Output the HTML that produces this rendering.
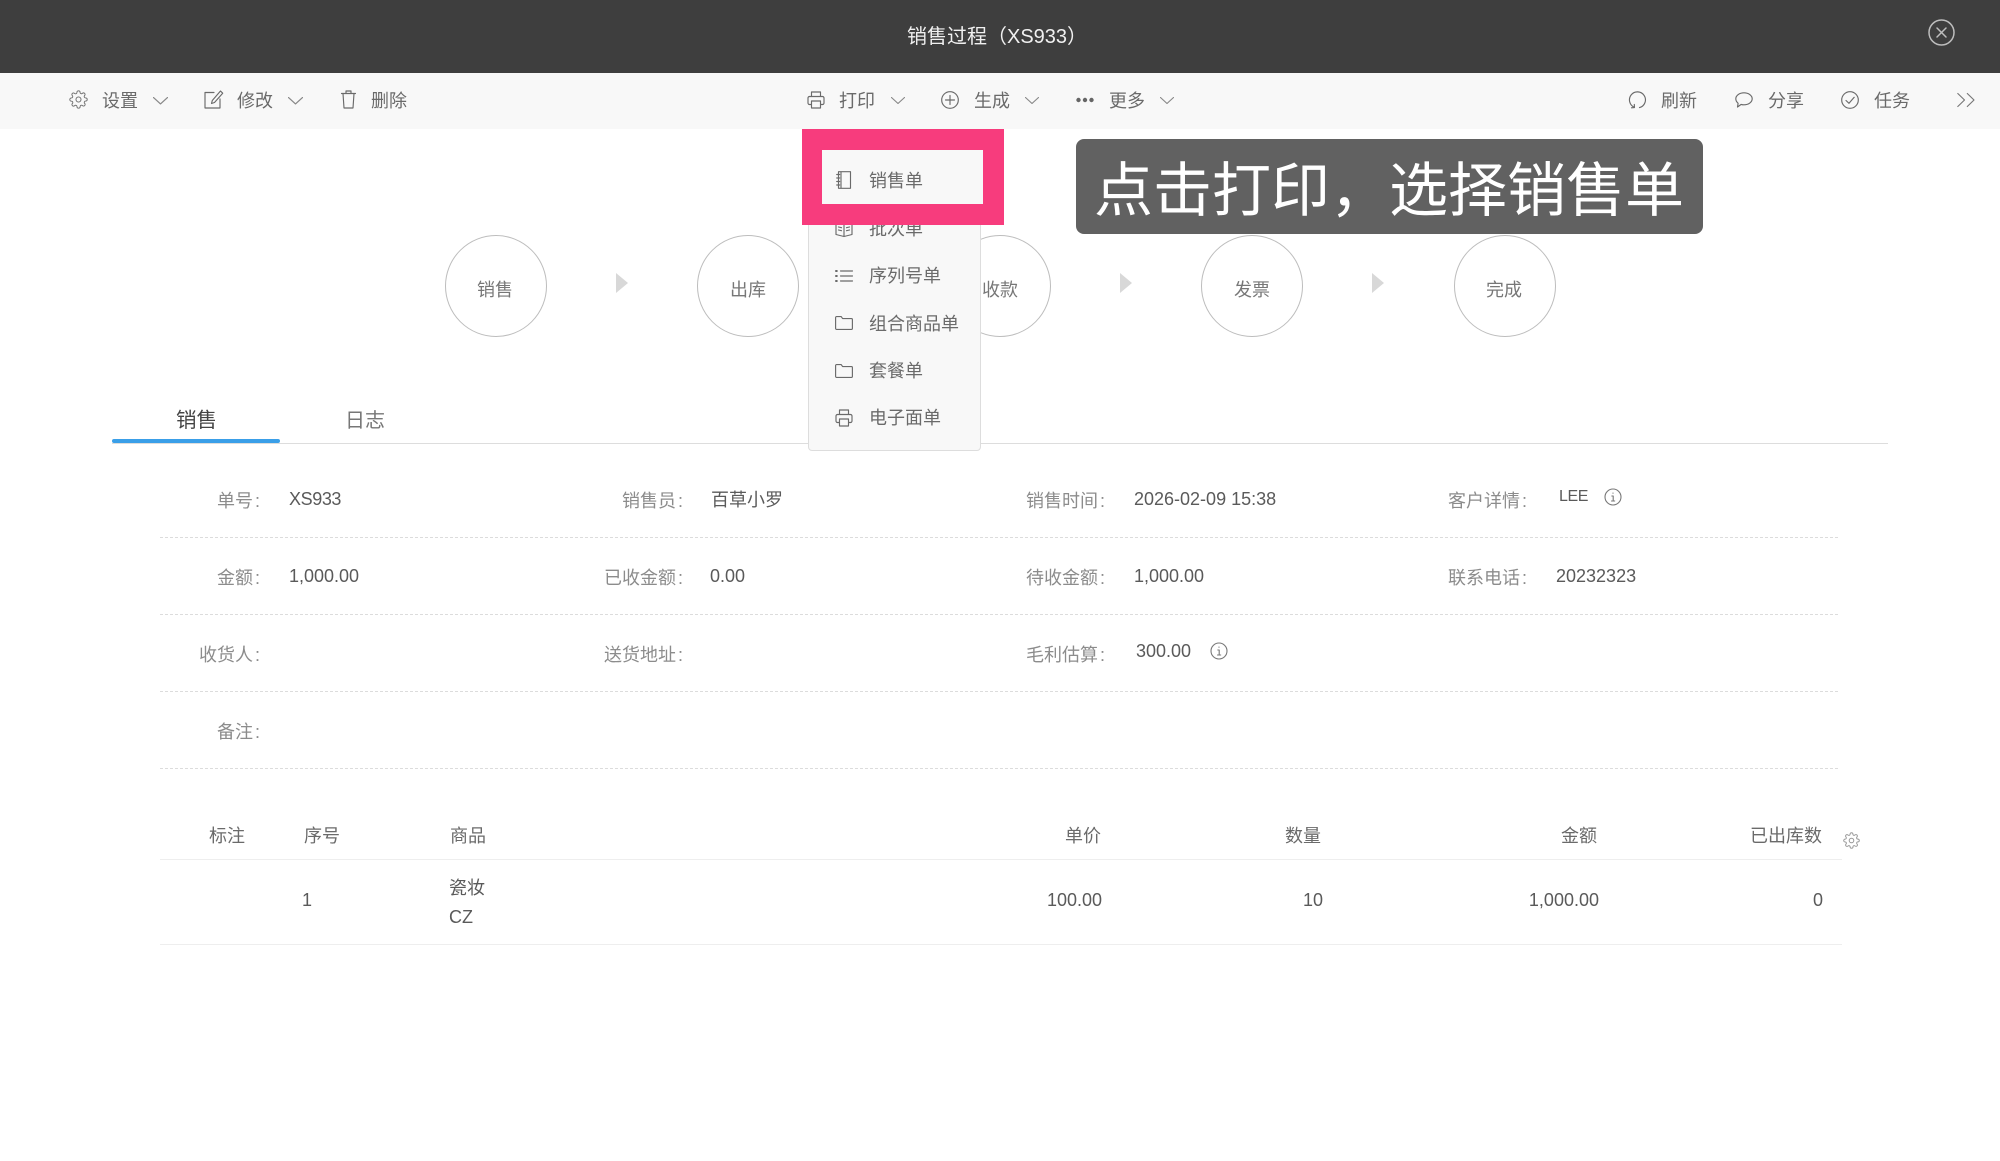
<!DOCTYPE html>
<html lang="zh">
<head>
<meta charset="utf-8">
<title>销售过程</title>
<style>
html,body{margin:0;padding:0;width:2000px;height:1161px;overflow:hidden;background:#fff}
body{position:relative;font-family:"Liberation Sans","Noto Sans CJK SC",sans-serif;font-size:18px;color:#555;font-weight:400}
.t{position:absolute;white-space:nowrap;line-height:24px;height:24px}
.r{text-align:right}
.b{position:absolute}
.tb{color:#6a6a6a}
.l{color:#8c8c8c}
.l span{margin-left:2px}
.v{color:#5a5a5a}
.h{color:#6a6a6a}
svg{position:absolute;overflow:visible;fill:none;stroke:#6a6a6a;stroke-width:1.15;stroke-linecap:round;stroke-linejoin:round}
.c{position:absolute;width:100px;height:100px;border:1.5px solid #bdbdbd;border-radius:50%;background:#fff}
.tri{position:absolute;width:0;height:0;border-left:12px solid #d8d8d8;border-top:10px solid transparent;border-bottom:10px solid transparent}
.d{position:absolute;left:160px;width:1678px;height:0;border-top:1px dashed #dcdcdc}
.ct{color:#777;width:100px;text-align:center}
</style>
</head>
<body>
<svg width="0" height="0" style="position:absolute"><defs>
<symbol id="gear" viewBox="0 0 24 24"><circle cx="12" cy="12" r="3.2"/><path d="M19.4 15a1.65 1.65 0 0 0 .33 1.82l.06.06a2 2 0 0 1 0 2.83 2 2 0 0 1-2.83 0l-.06-.06a1.65 1.65 0 0 0-1.82-.33 1.65 1.65 0 0 0-1 1.51V21a2 2 0 0 1-2 2 2 2 0 0 1-2-2v-.09A1.65 1.65 0 0 0 9 19.4a1.65 1.65 0 0 0-1.82.33l-.06.06a2 2 0 0 1-2.83 0 2 2 0 0 1 0-2.83l.06-.06a1.65 1.65 0 0 0 .33-1.82 1.65 1.65 0 0 0-1.51-1H3a2 2 0 0 1-2-2 2 2 0 0 1 2-2h.09A1.65 1.65 0 0 0 4.6 9a1.65 1.65 0 0 0-.33-1.82l-.06-.06a2 2 0 0 1 0-2.83 2 2 0 0 1 2.83 0l.06.06a1.65 1.65 0 0 0 1.82.33H9a1.65 1.65 0 0 0 1-1.51V3a2 2 0 0 1 2-2 2 2 0 0 1 2 2v.09a1.65 1.65 0 0 0 1 1.51 1.65 1.65 0 0 0 1.82-.33l.06-.06a2 2 0 0 1 2.83 0 2 2 0 0 1 0 2.83l-.06.06a1.65 1.65 0 0 0-.33 1.82V9a1.65 1.65 0 0 0 1.51 1H21a2 2 0 0 1 2 2 2 2 0 0 1-2 2h-.09a1.65 1.65 0 0 0-1.51 1z"/></symbol>
<symbol id="print" viewBox="0 0 18 18"><path d="M4.500 5.500V1h9v4.500M4.500 13.500H2.500a1.500 1.500 0 0 1-1.500-1.500V7a1.500 1.500 0 0 1 1.500-1.500h13A1.500 1.500 0 0 1 17 7v5a1.500 1.500 0 0 1-1.500 1.500h-2M4.500 10h9v7h-9z"/></symbol>
<symbol id="chev" viewBox="0 0 14 7"><path d="M.5.5 7 6.500 13.500.5"/></symbol>
<symbol id="folder" viewBox="0 0 18 14"><path d="M.6 1.600a1 1 0 0 1 1-1h4.600l1.400 2h8.800a1 1 0 0 1 1 1v8.800a1 1 0 0 1-1 1H1.600a1 1 0 0 1-1-1z"/></symbol>
<symbol id="info" viewBox="0 0 18 18"><circle cx="9" cy="9" r="8"/><path d="M7.800 8h1.400v5M7.500 13h3.200M9 5v.3"/></symbol>
</defs></svg>

<!-- header -->
<div class="b" style="left:0;top:0;width:2000px;height:73px;background:#3e3e3e"></div>
<div class="t" style="left:907px;top:25px;font-size:20px;color:#f0f0f0">销售过程（XS933）</div>
<svg style="left:1928px;top:19px;stroke:#bdbdbd;stroke-width:1.5" width="27" height="27" viewBox="0 0 27 27"><circle cx="13.500" cy="13.500" r="12.500"/><path d="M9 9l9 9M18 9l-9 9"/></svg>

<!-- toolbar -->
<div class="b" style="left:0;top:73px;width:2000px;height:56px;background:#f8f8f8"></div>

<svg style="left:69px;top:90px" width="19" height="19"><use href="#gear"/></svg>
<div class="t tb" style="left:102px;top:89px">设置</div>
<svg style="left:153px;top:97px;stroke:#888" width="15" height="7.500"><use href="#chev"/></svg>

<svg style="left:204px;top:90px" width="20" height="19" viewBox="0 0 20 19"><path d="M10 2.500H1v15.500h15V9M16.500 1l2.200 2.200L10.500 12.500l-3 1 .8-3z"/></svg>
<div class="t tb" style="left:237px;top:89px">修改</div>
<svg style="left:288px;top:97px;stroke:#888" width="15" height="7.500"><use href="#chev"/></svg>

<svg style="left:341px;top:90px" width="15" height="19" viewBox="0 0 15 19"><path d="M.5 3.500h14M5 3.500V1h5v2.500M2 3.500l1 14.500h9l1-14.500"/></svg>
<div class="t tb" style="left:371px;top:89px">删除</div>

<svg style="left:807px;top:91px" width="18" height="18"><use href="#print"/></svg>
<div class="t tb" style="left:839px;top:89px">打印</div>
<svg style="left:891px;top:97px;stroke:#888" width="14" height="7"><use href="#chev"/></svg>

<svg style="left:941px;top:91px" width="18" height="18" viewBox="0 0 18 18"><circle cx="9" cy="9" r="8.300"/><path d="M9 4.500v9M4.500 9h9"/></svg>
<div class="t tb" style="left:974px;top:89px">生成</div>
<svg style="left:1025px;top:97px;stroke:#888" width="14" height="7"><use href="#chev"/></svg>

<svg style="left:1076px;top:97px;fill:#666;stroke:none" width="18" height="6" viewBox="0 0 18 6"><circle cx="2.500" cy="3" r="2.200"/><circle cx="9" cy="3" r="2.200"/><circle cx="15.500" cy="3" r="2.200"/></svg>
<div class="t tb" style="left:1109px;top:89px">更多</div>
<svg style="left:1160px;top:97px;stroke:#888" width="14" height="7"><use href="#chev"/></svg>

<svg style="left:1628px;top:91px" width="18" height="18" viewBox="0 0 18 18"><path d="M6.500 16.300A8 8 0 1 1 11.500 16.600M6.300 13.500l.2 3-3 .3"/></svg>
<div class="t tb" style="left:1661px;top:89px">刷新</div>
<svg style="left:1735px;top:92px" width="18" height="16" viewBox="0 0 18 16"><path d="M9 .8c4.500 0 8.200 2.700 8.200 6s-3.700 6-8.200 6c-1 0-1.900-.1-2.800-.4L2.500 15l.6-3.700C1.700 10.100.8 8.500.8 6.800c0-3.300 3.700-6 8.200-6z"/></svg>
<div class="t tb" style="left:1768px;top:89px">分享</div>
<svg style="left:1841px;top:91px" width="18" height="18" viewBox="0 0 18 18"><circle cx="9" cy="9" r="8.300"/><path d="M5 9.500l3 2.800 5.200-6"/></svg>
<div class="t tb" style="left:1874px;top:89px">任务</div>
<svg style="left:1957px;top:93px;stroke:#777" width="18" height="14" viewBox="0 0 18 14"><path d="M.8.500 7.500 7 .8 13.500M10.300.5 17 7l-6.700 6.500"/></svg>

<!-- workflow circles -->
<div class="c" style="left:445px;top:235px"></div>
<div class="t ct" style="left:445px;top:278px">销售</div>
<div class="tri" style="left:616px;top:273px"></div>
<div class="c" style="left:697px;top:235px"></div>
<div class="t ct" style="left:698px;top:278px">出库</div>
<div class="tri" style="left:868px;top:273px"></div>
<div class="c" style="left:949px;top:235px"></div>
<div class="t ct" style="left:950px;top:278px">收款</div>
<div class="tri" style="left:1120px;top:273px"></div>
<div class="c" style="left:1201px;top:235px"></div>
<div class="t ct" style="left:1202px;top:278px">发票</div>
<div class="tri" style="left:1372px;top:273px"></div>
<div class="c" style="left:1454px;top:235px"></div>
<div class="t ct" style="left:1454px;top:278px">完成</div>

<!-- tabs -->
<div class="b" style="left:112px;top:443px;width:1776px;height:1px;background:#ddd"></div>
<div class="b" style="left:112px;top:439px;width:168px;height:4px;background:#3a9fe8;border-radius:2px"></div>
<div class="t" style="left:176px;top:409px;font-size:20.500px;color:#444">销售</div>
<div class="t" style="left:345px;top:409px;font-size:20px;color:#777">日志</div>

<!-- details -->
<div class="t l" style="left:217px;top:489px">单号<span>:</span></div>
<div class="t v" style="left:289px;top:487px;letter-spacing:-.4px">XS933</div>
<div class="t l r" style="right:1317px;top:489px">销售员<span>:</span></div>
<div class="t v" style="left:711px;top:488px">百草小罗</div>
<div class="t l" style="left:1026px;top:489px">销售时间<span>:</span></div>
<div class="t v" style="left:1134px;top:487px">2026-02-09 15:38</div>
<div class="t l" style="left:1448px;top:489px">客户详情<span>:</span></div>
<div class="t v" style="left:1559px;top:485px;font-size:16px;letter-spacing:-.4px">LEE</div>
<svg style="left:1604px;top:488px;stroke:#777;stroke-width:1.1" width="18" height="18"><use href="#info"/></svg>
<div class="d" style="top:537px"></div>

<div class="t l" style="left:217px;top:566px">金额<span>:</span></div>
<div class="t v" style="left:289px;top:564px">1,000.00</div>
<div class="t l r" style="right:1317px;top:566px">已收金额<span>:</span></div>
<div class="t v" style="left:710px;top:564px">0.00</div>
<div class="t l" style="left:1026px;top:566px">待收金额<span>:</span></div>
<div class="t v" style="left:1134px;top:564px">1,000.00</div>
<div class="t l" style="left:1448px;top:566px">联系电话<span>:</span></div>
<div class="t v" style="left:1556px;top:564px">20232323</div>
<div class="d" style="top:614px"></div>

<div class="t l" style="left:199px;top:643px">收货人<span>:</span></div>
<div class="t l r" style="right:1317px;top:643px">送货地址<span>:</span></div>
<div class="t l" style="left:1026px;top:643px">毛利估算<span>:</span></div>
<div class="t v" style="left:1136px;top:639px">300.00</div>
<svg style="left:1210px;top:642px;stroke:#777;stroke-width:1.1" width="18" height="18"><use href="#info"/></svg>
<div class="d" style="top:691px"></div>

<div class="t l" style="left:217px;top:720px">备注<span>:</span></div>
<div class="d" style="top:768px"></div>

<!-- table -->
<div class="t h" style="left:209px;top:824px">标注</div>
<div class="t h" style="left:304px;top:824px">序号</div>
<div class="t h" style="left:450px;top:824px">商品</div>
<div class="t h r" style="right:899px;top:824px">单价</div>
<div class="t h r" style="right:679px;top:824px">数量</div>
<div class="t h r" style="right:403px;top:824px">金额</div>
<div class="t h r" style="right:178px;top:824px">已出库数</div>
<svg style="left:1843px;top:832px;stroke:#999;stroke-width:1.400" width="17" height="17"><use href="#gear"/></svg>
<div class="b" style="left:160px;top:859px;width:1682px;height:1px;background:#eee"></div>
<div class="t v" style="left:302px;top:888px">1</div>
<div class="t v" style="left:449px;top:876px">瓷妆</div>
<div class="t v" style="left:449px;top:905px">CZ</div>
<div class="t v r" style="right:898px;top:888px">100.00</div>
<div class="t v r" style="right:677px;top:888px">10</div>
<div class="t v r" style="right:401px;top:888px">1,000.00</div>
<div class="t v r" style="right:177px;top:888px">0</div>
<div class="b" style="left:160px;top:944px;width:1682px;height:1px;background:#eee"></div>

<!-- dropdown -->
<div class="b" style="left:808px;top:129px;width:171px;height:320px;background:#f8f8f8;border:1px solid #ddd;border-radius:4px"></div>
<svg style="left:835px;top:220px" width="18" height="18" viewBox="0 0 18 18"><path d="M1 2.500l8 2 8-2v12l-8 2-8-2zM9 4.500v12M3.500 7l3 .7M3.500 10l3 .7M14.500 7l-3 .7M14.500 10l-3 .7"/></svg>
<div class="t tb" style="left:869px;top:217px">批次单</div>
<svg style="left:835px;top:270px" width="18" height="12" viewBox="0 0 18 12"><path d="M5.500 1H17.500M5.500 6H17.500M5.500 11H17.500"/><path d="M1 1h.8M1 6h.8M1 11h.8" stroke-width="2"/></svg>
<div class="t tb" style="left:869px;top:264px">序列号单</div>
<svg style="left:835px;top:316px" width="18" height="14"><use href="#folder"/></svg>
<div class="t tb" style="left:869px;top:312px">组合商品单</div>
<svg style="left:835px;top:364px" width="18" height="14"><use href="#folder"/></svg>
<div class="t tb" style="left:869px;top:359px">套餐单</div>
<svg style="left:835px;top:409px" width="18" height="18"><use href="#print"/></svg>
<div class="t tb" style="left:869px;top:406px">电子面单</div>

<!-- pink highlight -->
<div class="b" style="left:802px;top:129px;width:202px;height:96px;background:#f73c7d"></div>
<div class="b" style="left:822px;top:150px;width:161px;height:54px;background:#f8f8f8"></div>
<svg style="left:836px;top:171px" width="15" height="18" viewBox="0 0 15 18"><path d="M2.500 .7h12v16.600h-12zM5 .7v16.600M.7 3.500h3M.7 7h3M.7 10.500h3M.7 14h3"/></svg>
<div class="t tb" style="left:869px;top:169px">销售单</div>

<!-- overlay callout -->
<div class="b" style="left:1076px;top:139px;width:627px;height:95px;background:#616161;border-radius:8px"></div>
<div class="t" style="left:1094px;top:151px;height:80px;line-height:80px;font-size:59px;color:#fff">点击打印，选择销售单</div>
</body>
</html>
